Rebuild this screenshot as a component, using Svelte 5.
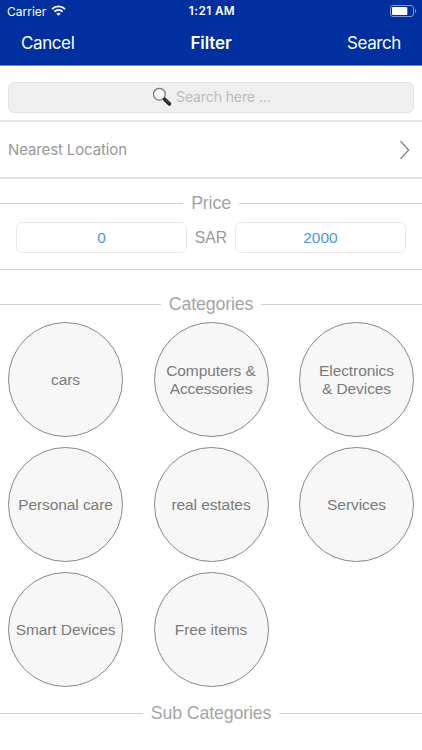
<script lang="ts">
  let search = $state("");
  let minPrice = $state("0");
  let maxPrice = $state("2000");

  const categories = [
    "cars",
    "Computers &\nAccessories",
    "Electronics\n& Devices",
    "Personal care",
    "real estates",
    "Services",
    "Smart Devices",
    "Free items",
  ];
</script>

{#snippet sectionTitle(title: string)}
  <div class="section-title"><span>{title}</span></div>
{/snippet}

<div class="screen">
  <header>
    <div class="status-bar">
      <div class="carrier">
        <span>Carrier</span>
        <svg width="15" height="11" viewBox="0 0 15 11" fill="none" stroke="#fff" stroke-width="1.9">
          <path d="M1 4.1C4.7.5 10.3.5 14 4.1" />
          <path d="M3.4 6.6c2.4-2.2 5.8-2.2 8.2 0" />
          <path d="M5.3 8.5c1.3-1.1 3.1-1.1 4.4 0L7.5 10.8z" fill="#fff" stroke="none" />
        </svg>
      </div>
      <span class="time">1:21 AM</span>
      <svg class="battery" width="27" height="12" viewBox="0 0 27 12">
        <rect x=".5" y=".5" width="23" height="11" rx="2.5" fill="none" stroke="#8296d0" />
        <rect x="2" y="2" width="15.3" height="8" rx="1" fill="#fff" />
        <path d="M25 4v4q1.3-.6 1.3-2T25 4z" fill="#8296d0" />
      </svg>
    </div>
    <nav>
      <span class="action">Cancel</span>
      <span class="title">Filter</span>
      <span class="action right">Search</span>
    </nav>
  </header>

  <div class="search-area">
    <label class="search-box">
      <svg width="20" height="20" viewBox="0 0 20 20">
        <circle cx="7.4" cy="7.2" r="5.9" fill="#f4f6f7" stroke="#72777c" stroke-width="1.2" />
        <path d="M3.8 7a3.8 3.8 0 0 1 3.5-3.6" fill="none" stroke="#fff" stroke-width="1" />
        <path d="M11.4 11.2l2 1.8" stroke="#555" stroke-width="1.8" />
        <path d="M12.8 12.5l4.6 4.4" stroke="#222" stroke-width="3.6" stroke-linecap="round" />
        <path d="M13.4 12.4l4 3.8" stroke="#777" stroke-width=".6" />
      </svg>
      <input bind:value={search} placeholder="Search here ..." />
    </label>
  </div>

  <div class="location">
    <span>Nearest Location</span>
    <svg width="12" height="20" viewBox="0 0 12 20" fill="none" stroke="#777" stroke-width="1.2">
      <path d="M1.5 1.2L9.7 10l-8.2 8.8" />
    </svg>
  </div>

  <section class="price">
    {@render sectionTitle("Price")}
    <div class="price-range">
      <input bind:value={minPrice} />
      <span>SAR</span>
      <input bind:value={maxPrice} />
    </div>
  </section>

  <section class="categories">
    {@render sectionTitle("Categories")}
    <div class="category-grid">
      {#each categories as category}
        <div class="category">{category}</div>
      {/each}
    </div>
  </section>

  <section>
    {@render sectionTitle("Sub Categories")}
  </section>
</div>

<style>
  :global(body) {
    background: #fff;
  }

  .screen {
    height: 750px;
    overflow: hidden;
    font-family: "Liberation Sans", Arial, sans-serif;
    color: #999;
  }

  .screen * {
    box-sizing: border-box;
  }

  header {
    height: 66px;
    background: #002fa0;
    border-bottom: 1px solid #7186c7;
    color: #fff;
    font-family: Inter, sans-serif;
  }

  .status-bar {
    display: grid;
    grid-template-columns: 1fr auto 1fr;
    align-items: center;
    height: 22px;
    padding: 0 5px 0 7px;
    font-size: 12px;
  }

  .carrier {
    display: flex;
    align-items: center;
    gap: 5px;
    font-size: 12px;
  }

  .carrier svg {
    margin-bottom: 2px;
  }

  .time {
    font-weight: 600;
    font-size: 11.8px;
    letter-spacing: 0.4px;
  }

  .battery {
    justify-self: end;
    margin-bottom: 1px;
  }

  nav {
    display: grid;
    grid-template-columns: 1fr auto 1fr;
    align-items: center;
    height: 42px;
    padding: 0 21px;
    font-size: 17px;
  }

  .action {
    letter-spacing: -0.4px;
  }

  .title {
    font-weight: 600;
    letter-spacing: -0.1px;
  }

  .right {
    text-align: right;
  }

  .search-area {
    height: 56px;
    padding: 16px 8px 0;
    border-bottom: 2px solid #e2e2e2;
  }

  .search-box {
    display: flex;
    align-items: center;
    height: 31px;
    padding-left: 143px;
    gap: 4px;
    background: #efeff0;
    border: 1px solid #e4e4e5;
    border-radius: 6px;
  }

  .search-box svg {
    margin-top: -1px;
  }

  input {
    min-width: 0;
    padding: 0;
    border: 0;
    outline: 0;
    background: none;
    font-family: inherit;
  }

  .search-box input {
    flex: 1;
    margin-top: -2px;
    font-family: Inter, sans-serif;
    font-size: 14px;
    letter-spacing: -0.1px;
  }

  .search-box input::placeholder {
    color: #bcbcc1;
    opacity: 1;
  }

  .location {
    display: flex;
    align-items: center;
    justify-content: space-between;
    height: 57px;
    padding: 0 11px 0 8px;
    border-bottom: 2px solid #e2e2e2;
    font-family: Inter, sans-serif;
    font-size: 15px;
    letter-spacing: -0.12px;
  }

  .section-title {
    display: flex;
    align-items: center;
    gap: 8px;
    height: 20px;
    font-size: 17.8px;
    line-height: 20px;
    letter-spacing: -0.15px;
    color: #a5a5a5;
    white-space: nowrap;
  }

  .section-title::before,
  .section-title::after {
    content: "";
    flex: 1;
    height: 1px;
    background: #d2d2d2;
  }

  .price {
    height: 91px;
    padding-top: 14px;
    border-bottom: 1px solid #d2d2d2;
  }

  .price-range {
    display: grid;
    grid-template-columns: 171px 48px 171px;
    align-items: center;
    margin: 9px 16px 0;
    text-align: center;
    font-size: 15.7px;
  }

  .price-range input {
    height: 31px;
    border: 1px solid #e8e8e8;
    border-radius: 6px;
    text-align: center;
    font-size: 15.5px;
    color: #4b98df;
  }

  .categories {
    padding-top: 24px;
  }

  .category-grid {
    display: grid;
    grid-template-columns: repeat(3, 115px);
    justify-content: space-between;
    row-gap: 10px;
    padding: 8px 8px 16px;
  }

  .category {
    display: flex;
    align-items: center;
    justify-content: center;
    height: 115px;
    border: 1px solid #888;
    border-radius: 50%;
    background: #f7f7f7;
    color: #7b7b7b;
    font-size: 15.5px;
    line-height: 17.5px;
    letter-spacing: -0.08px;
    text-align: center;
    white-space: pre;
  }
</style>
